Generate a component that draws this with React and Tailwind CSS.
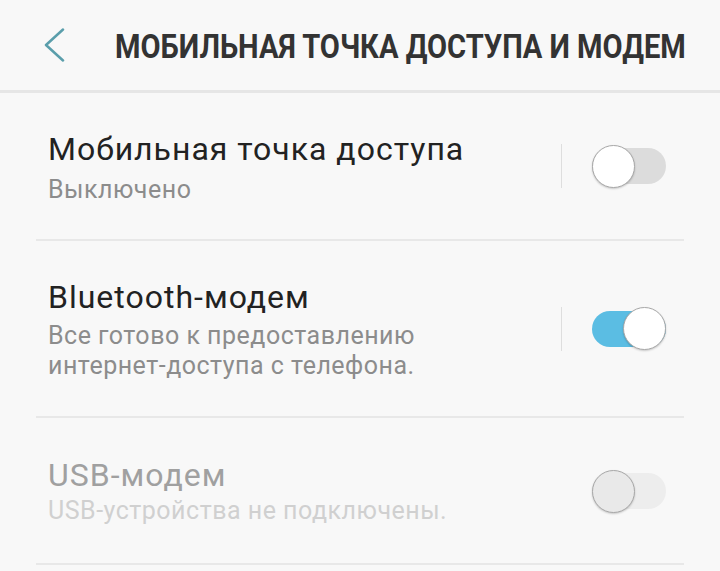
import React from "react";

const Toggle = ({ on, disabled }) => {
  return (
    <div className="relative w-[74px] h-[43px] flex items-center">
      <div
        className={`w-[74px] h-[36px] rounded-full ${
          on ? "bg-[#5bbde3]" : disabled ? "bg-[#ededed]" : "bg-[#dcdcdc]"
        }`}
      />
      <div
        className={`absolute top-0 w-[43px] h-[43px] rounded-full border border-[#a8a8a8] shadow-[0_1px_2px_rgba(0,0,0,0.2)] ${
          on ? "right-0" : "left-0"
        } ${disabled ? "bg-[#e9e9e9]" : "bg-white"}`}
      />
    </div>
  );
};

const Row = ({ title, subtitle, on, disabled, separator, pad, toggleTop }) => {
  return (
    <div className={`flex items-start border-b-2 border-[#e8e8e8] ${pad}`}>
      <div className="flex-1 pl-[12px]">
        <p
          className={`text-[32px] leading-[40px] tracking-[1px] ${
            disabled ? "text-[#a0a0a0]" : "text-[#222222]"
          }`}
        >
          {title}
        </p>
        <div
          className={`text-[25px] tracking-[0.5px] ${
            disabled ? "text-[#d0d0d0]" : "text-[#8c8c8c]"
          }`}
        >
          {subtitle}
        </div>
      </div>
      <div className={`flex items-center ${toggleTop}`}>
        <div
          className={`w-px h-[44px] ${separator ? "bg-[#dedede]" : "bg-transparent"}`}
        />
        <div className="pl-[30px] pr-[18px]">
          <Toggle on={on} disabled={disabled} />
        </div>
      </div>
    </div>
  );
};

const App = () => {
  return (
    <div
      className="w-[720px] h-[571px] overflow-hidden bg-[#f8f8f8]"
      style={{ fontFamily: "Roboto, 'Noto Sans', sans-serif" }}
    >
      <header className="h-[93px] flex items-center border-b-[3px] border-[#e6e6e6]">
        <div className="pl-[44px] w-[115px] shrink-0">
          <svg width="22" height="34" viewBox="0 0 22 34" fill="none">
            <path
              d="M19 1.5 L2 17 L19 32.5"
              stroke="#5a9eab"
              strokeWidth="2.5"
              strokeLinecap="round"
              strokeLinejoin="round"
            />
          </svg>
        </div>
        <h1 className="text-[34px] font-bold text-[#333333] whitespace-nowrap origin-left scale-x-[0.856] mt-[3px]">
          МОБИЛЬНАЯ ТОЧКА ДОСТУПА И МОДЕМ
        </h1>
      </header>

      <main className="px-[36px]">
        <Row
          title="Мобильная точка доступа"
          subtitle={<p className="mt-[2.5px] leading-[36px]">Выключено</p>}
          separator
          pad="pt-[36px] pb-[31px]"
          toggleTop="mt-[15px]"
        />
        <Row
          title="Bluetooth-модем"
          subtitle={
            <div className="mt-[4.5px] leading-[30px]">
              <p>Все готово к предоставлению</p>
              <p>интернет-доступа с телефона.</p>
            </div>
          }
          on
          separator
          pad="pt-[36px] pb-[35px]"
          toggleTop="mt-[30px]"
        />
        <Row
          title="USB-модем"
          subtitle={<p className="leading-[32px]">USB-устройства не подключены.</p>}
          disabled
          pad="pt-[37px] pb-[36px]"
          toggleTop="mt-[14px]"
        />
      </main>
    </div>
  );
};

export default App;
